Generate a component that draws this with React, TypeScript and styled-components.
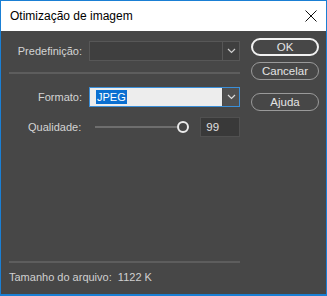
import React from "react";
import styled, { createGlobalStyle } from "styled-components";

const Global = createGlobalStyle`
  html, body { margin: 0; padding: 0; background: #474747; }
  * { box-sizing: border-box; }
`;

const Win = styled.div`
  width: 327px;
  height: 296px;
  border: 1px solid #1a7fd4;
  border-bottom-width: 2px;
  display: flex;
  flex-direction: column;
  font-family: "Liberation Sans", Arial, sans-serif;
  background: #474747;
  overflow: hidden;
`;

const TitleBar = styled.div`
  height: 30px;
  background: #ffffff;
  display: flex;
  align-items: center;
  justify-content: space-between;
  padding: 0 9px 0 9px;
  flex: none;
`;

const Title = styled.span`
  font-size: 12px;
  color: #000;
`;

const Body = styled.div`
  flex: 1;
  display: flex;
  padding: 0 7px 0 7px;
`;

const Left = styled.div`
  width: 232px;
  display: flex;
  flex-direction: column;
`;

const Right = styled.div`
  flex: 1;
  display: flex;
  flex-direction: column;
  align-items: flex-end;
  padding-top: 7px;
`;

const Row = styled.div<{ $mt: number }>`
  display: flex;
  align-items: center;
  margin-top: ${(p) => p.$mt}px;
`;

const Label = styled.span`
  width: 74px;
  text-align: right;
  font-size: 11px;
  color: #d4d4d4;
  margin-right: 7px;
  white-space: nowrap;
`;

const Select = styled.div<{ $light?: boolean }>`
  width: 151px;
  height: 20px;
  display: flex;
  border: 1px solid ${(p) => (p.$light ? "#3b8fd9" : "#575757")};
  background: ${(p) => (p.$light ? "#ededed" : "#3f3f3f")};
`;

const SelectValue = styled.div`
  flex: 1;
  display: flex;
  align-items: center;
  padding-left: 6px;
`;

const Highlight = styled.span`
  background: #0a6fd1;
  color: #fff;
  font-size: 11px;
  line-height: 14px;
  padding: 0 1px;
`;

const Arrow = styled.div<{ $light?: boolean }>`
  width: 17px;
  display: flex;
  align-items: center;
  justify-content: center;
  border-left: 1px solid ${(p) => (p.$light ? "#4a4a4a" : "#575757")};
  background: ${(p) => (p.$light ? "#505050" : "#3f3f3f")};
`;

const Sep = styled.div<{ $mt: number }>`
  height: 2px;
  background: #5d5d5d;
  margin-top: ${(p) => p.$mt}px;
  margin-left: 1px;
`;

const Slider = styled.div`
  width: 95px;
  display: flex;
  align-items: center;
  margin-left: 7px;
  height: 14px;
`;

const Track = styled.div`
  flex: 1;
  height: 2px;
  background: #6e6e6e;
`;

const Knob = styled.div`
  width: 12px;
  height: 12px;
  border-radius: 50%;
  border: 2.5px solid #ececec;
  background: #474747;
  flex: none;
`;

const NumBox = styled.div`
  width: 40px;
  height: 20px;
  margin-left: 11px;
  background: #393939;
  border: 1px solid #505050;
  color: #e0e0e0;
  font-size: 11.5px;
  display: flex;
  align-items: center;
  padding-left: 5px;
`;

const Spacer = styled.div`
  flex: 1;
`;

const Footer = styled.div`
  font-size: 11px;
  color: #d0d0d0;
  margin: 8px 0 11px 1px;
  white-space: pre;
`;

const Btn = styled.div<{ $primary?: boolean; $mt: number }>`
  width: 68px;
  height: 18px;
  margin-top: ${(p) => p.$mt}px;
  border-radius: 9px;
  border: ${(p) => (p.$primary ? "2px solid #f2f2f2" : "1px solid #9a9a9a")};
  color: #e4e4e4;
  font-size: 11.5px;
  display: flex;
  align-items: center;
  justify-content: center;
`;

const Chevron = ({ color }: { color: string }) => (
  <svg width="9" height="6" viewBox="0 0 9 6">
    <path d="M1 1 L4.5 4.5 L8 1" fill="none" stroke={color} strokeWidth="1.2" />
  </svg>
);

export default function App() {
  return (
    <>
      <Global />
      <Win>
        <TitleBar>
          <Title>Otimização de imagem</Title>
          <svg width="12" height="12" viewBox="0 0 12 12">
            <path d="M0.5 0.5 L11.5 11.5 M11.5 0.5 L0.5 11.5" stroke="#111" strokeWidth="1" />
          </svg>
        </TitleBar>
        <Body>
          <Left>
            <Row $mt={10}>
              <Label>Predefinição:</Label>
              <Select>
                <SelectValue />
                <Arrow>
                  <Chevron color="#cfcfcf" />
                </Arrow>
              </Select>
            </Row>
            <Sep $mt={11} />
            <Row $mt={13}>
              <Label>Formato:</Label>
              <Select $light>
                <SelectValue>
                  <Highlight>JPEG</Highlight>
                </SelectValue>
                <Arrow $light>
                  <Chevron color="#dcdcdc" />
                </Arrow>
              </Select>
            </Row>
            <Row $mt={10}>
              <Label>Qualidade:</Label>
              <Slider>
                <Track />
                <Knob />
              </Slider>
              <NumBox>99</NumBox>
            </Row>
            <Spacer />
            <Sep $mt={0} />
            <Footer>Tamanho do arquivo:  1122 K</Footer>
          </Left>
          <Right>
            <Btn $primary $mt={0}>OK</Btn>
            <Btn $mt={6}>Cancelar</Btn>
            <Btn $mt={13}>Ajuda</Btn>
          </Right>
        </Body>
      </Win>
    </>
  );
}
